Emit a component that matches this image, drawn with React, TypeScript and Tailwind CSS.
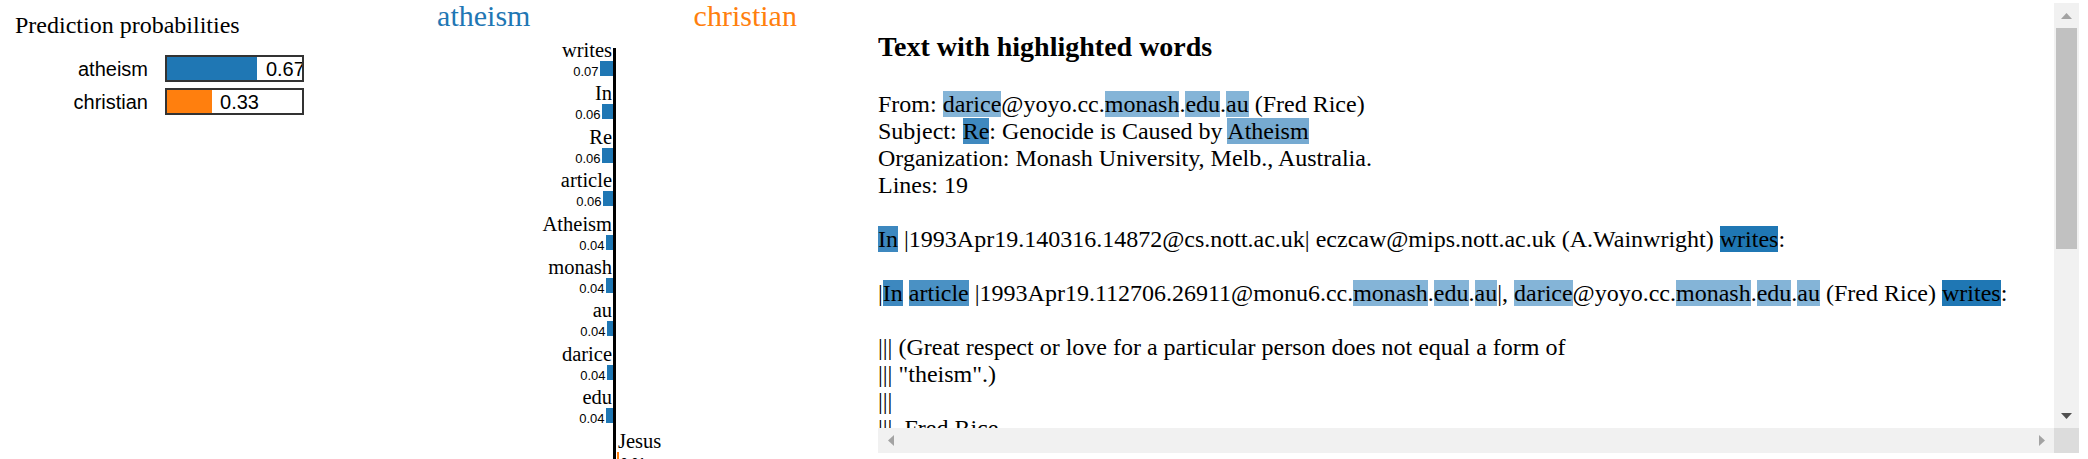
import React from "react";

type Seg = string | [string, string];

const W = "bg-[#1f77b4]";
const I = "bg-[#3d88bf]";
const R = "bg-[#3f89bf]";
const A = "bg-[#4a91c4]";
const T = "bg-[#76aad1]";
const L = "bg-[#84b4d7]";

const text: Seg[] = [
  "From: ", ["darice", L], "@yoyo.cc.", ["monash", L], ".", ["edu", L], ".", ["au", L], " (Fred Rice)\n",
  "Subject: ", ["Re", R], ": Genocide is Caused by ", ["Atheism", T], "\n",
  "Organization: Monash University, Melb., Australia.\n",
  "Lines: 19\n",
  "\n",
  ["In", I], " |1993Apr19.140316.14872@cs.nott.ac.uk| eczcaw@mips.nott.ac.uk (A.Wainwright) ", ["writes", W], ":\n",
  "\n",
  "|", ["In", I], " ", ["article", A], " |1993Apr19.112706.26911@monu6.cc.", ["monash", L], ".", ["edu", L], ".", ["au", L],
  "|, ", ["darice", L], "@yoyo.cc.", ["monash", L], ".", ["edu", L], ".", ["au", L], " (Fred Rice) ", ["writes", W], ":\n",
  "\n",
  "||| (Great respect or love for a particular person does not equal a form of\n",
  "||| \"theism\".)\n",
  "|||\n",
  "|||  Fred Rice\n",
  "|||\n",
];

const probs = [
  { label: "atheism", value: 0.67, fill: "bg-[#1f77b4]" },
  { label: "christian", value: 0.33, fill: "bg-[#ff7f0e]" },
];

const pos = [
  { name: "writes", v: "0.07", w: 13 },
  { name: "In", v: "0.06", w: 11 },
  { name: "Re", v: "0.06", w: 11 },
  { name: "article", v: "0.06", w: 10 },
  { name: "Atheism", v: "0.04", w: 7 },
  { name: "monash", v: "0.04", w: 7 },
  { name: "au", v: "0.04", w: 6 },
  { name: "darice", v: "0.04", w: 6 },
  { name: "edu", v: "0.04", w: 7 },
];

const neg = [{ name: "Jesus", v: "0.01", w: 2 }];

export default function App() {
  return (
    <div className="h-[459px] w-[2088px] overflow-hidden bg-white flex items-start leading-[normal] text-black">
      {/* Left: prediction probabilities */}
      <div className="w-[350px] shrink-0 pl-[15px] pt-[11px]">
        <div className="font-['Liberation_Serif',serif] text-[24px] leading-[28px]">Prediction probabilities</div>
        <div className="mt-[16px] flex flex-col gap-[6px]">
          {probs.map((p) => (
            <div key={p.label} className="flex items-start h-[27px]">
              <div className="w-[133px] text-right font-['Liberation_Sans',sans-serif] text-[20px] leading-[27px] pt-[1px]">
                {p.label}
              </div>
              <div className="ml-[17px] w-[139px] h-[27px] border-2 border-[#333] flex overflow-hidden">
                <div className={`${p.fill} h-full shrink-0`} style={{ width: `${p.value * 135}px` }} />
                <span className="ml-[8.5px] shrink-0 font-['Liberation_Sans',sans-serif] text-[20px] leading-[23px] pt-[1px]">
                  {p.value.toFixed(2)}
                </span>
              </div>
            </div>
          ))}
        </div>
      </div>

      {/* Middle: feature weights chart */}
      <div className="w-[528px] shrink-0 pt-[1px] font-['Liberation_Serif',serif]">
        <div className="flex h-[30px] text-[30px] leading-[30px]">
          <div className="w-[263px] pl-[5px] text-center text-[#1f77b4]">atheism</div>
          <div className="w-[266px] text-center text-[#ff7f0e]">christian</div>
        </div>
        <div className="mt-[8px] flex">
          <div className="w-[263px] flex flex-col">
            {pos.map((f) => (
              <div key={f.name} className="h-[43.4px] shrink-0">
                <div className="pr-[1px] text-right text-[20.5px] leading-[22px] h-[22px] whitespace-nowrap">{f.name}</div>
                <div className="h-[15px] flex justify-end items-end">
                  <span className="mr-[1.5px] font-['Liberation_Sans',sans-serif] text-[13px] leading-[9px]">{f.v}</span>
                  <div className="h-[15px] bg-[#1f77b4]" style={{ width: `${f.w}px` }} />
                </div>
              </div>
            ))}
            <div className="h-[43.4px] shrink-0" />
          </div>
          <div className="w-[3px] mt-[9px] bg-black shrink-0" />
          <div className="flex-1 flex flex-col">
            <div className="h-[390.6px] shrink-0" />
            {neg.map((f) => (
              <div key={f.name} className="h-[43.4px] shrink-0">
                <div className="pl-[2px] text-left text-[20.5px] leading-[22px] h-[22px] whitespace-nowrap">{f.name}</div>
                <div className="h-[15px] flex items-end">
                  <div className="ml-[1px] h-[15px] bg-[#ff7f0e]" style={{ width: `${f.w}px` }} />
                  <span className="ml-[1.5px] font-['Liberation_Sans',sans-serif] text-[13px] leading-[9px]">{f.v}</span>
                </div>
              </div>
            ))}
          </div>
        </div>
      </div>

      {/* Right: text with highlighted words (scroll box) */}
      <div className="mt-[3px] w-[1201px] h-[450px] shrink-0 grid grid-cols-[1176px_25px] grid-rows-[425px_25px]">
        <div className="overflow-hidden font-['Liberation_Serif',serif]">
          <h3 className="mt-[28px] mb-[28px] text-[28px] font-bold leading-[normal]">Text with highlighted words</h3>
          <div className="text-[24px] leading-[normal] whitespace-pre">
            {text.map((s, i) =>
              typeof s === "string" ? (
                <React.Fragment key={i}>{s}</React.Fragment>
              ) : (
                <span key={i} className={s[1]}>
                  {s[0]}
                </span>
              )
            )}
          </div>
        </div>
        <div className="bg-[#f1f1f1] flex flex-col">
          <div className="h-[25px] flex items-center justify-center shrink-0">
            <svg width="11" height="6" viewBox="0 0 11 6">
              <polygon points="0,6 5.5,0 11,6" fill="#a3a3a3" />
            </svg>
          </div>
          <div className="mx-[2px] h-[221px] bg-[#c1c1c1] shrink-0" />
          <div className="flex-1" />
          <div className="h-[25px] flex items-center justify-center shrink-0">
            <svg width="11" height="6" viewBox="0 0 11 6">
              <polygon points="0,0 11,0 5.5,6" fill="#505050" />
            </svg>
          </div>
        </div>
        <div className="bg-[#f1f1f1] flex justify-between">
          <div className="w-[25px] flex items-center justify-center">
            <svg width="6" height="11" viewBox="0 0 6 11">
              <polygon points="6,0 6,11 0,5.5" fill="#a3a3a3" />
            </svg>
          </div>
          <div className="w-[25px] flex items-center justify-center">
            <svg width="6" height="11" viewBox="0 0 6 11">
              <polygon points="0,0 0,11 6,5.5" fill="#a3a3a3" />
            </svg>
          </div>
        </div>
        <div className="bg-[#dcdcdc]" />
      </div>
    </div>
  );
}
